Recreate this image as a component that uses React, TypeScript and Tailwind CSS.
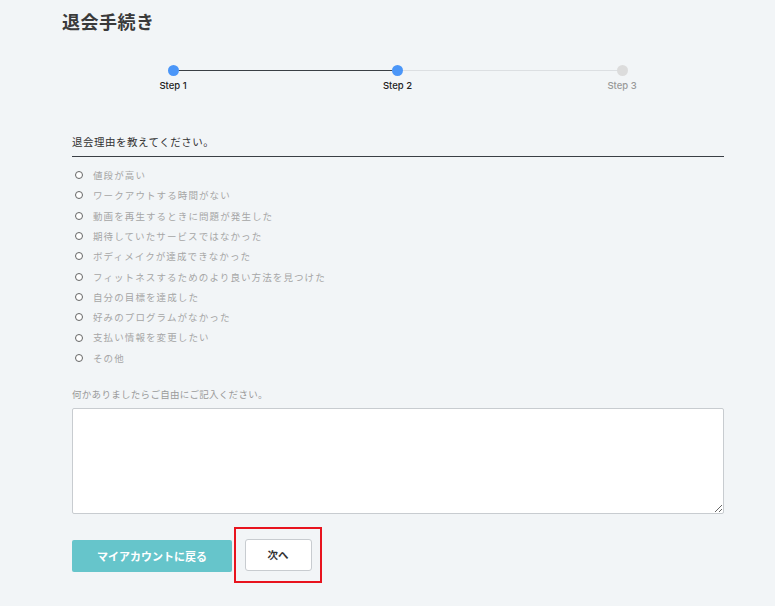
const reasons = [
  "値段が高い",
  "ワークアウトする時間がない",
  "動画を再生するときに問題が発生した",
  "期待していたサービスではなかった",
  "ボディメイクが達成できなかった",
  "フィットネスするためのより良い方法を見つけた",
  "自分の目標を達成した",
  "好みのプログラムがなかった",
  "支払い情報を変更したい",
  "その他",
];

const jp = "font-['Noto_Sans_CJK_JP',sans-serif]";

function Stepper() {
  return (
    <div className="relative ml-[105px] mr-[106px] mt-[32px] h-[40px]">
      <div className="absolute left-[6px] right-[6px] top-[5px] flex">
        <div className="h-px flex-1 bg-[#3a3f45]" />
        <div className="h-px flex-1 bg-[#dcdfe2]" />
      </div>
      <div className="relative flex justify-between">
        {["Step 1", "Step 2", "Step 3"].map((s, i) => (
          <div key={s} className="flex w-[12px] flex-col items-center">
            <div
              className={
                i < 2
                  ? "h-[11px] w-[11px] rounded-full bg-[#4b96f8]"
                  : "h-[11px] w-[11px] rounded-full bg-[#dcdcdc]"
              }
            />
            <div
              className={
                "mt-[3px] whitespace-nowrap font-['Inter',sans-serif] text-[9.5px] font-medium " +
                (i < 2 ? "text-[#222]" : "text-[#999]")
              }
            >
              {s}
            </div>
          </div>
        ))}
      </div>
    </div>
  );
}

export default function App() {
  return (
    <div className={`min-h-[606px] w-[775px] bg-[#f2f5f7] ${jp}`}>
      <div className="pl-[62px] pr-[41px] pt-[9px]">
        <h1 className="text-[18px] font-semibold leading-[24px] text-[#3a3a3a] tracking-[0.5px]">
          退会手続き
        </h1>
        <Stepper />
        <div className="px-[10px] pt-[29px]">
          <div className="border-b border-[#3a3f45] pb-[6px] text-[10.5px] leading-[16px] tracking-[0.5px] text-[#333]">
            退会理由を教えてください。
          </div>
          <div className="mt-[8px] flex flex-col">
            {reasons.map((r) => (
              <label key={r} className="flex h-[20.3px] items-center">
                <span className="ml-[3px] h-[8px] w-[8px] rounded-full border border-[#666] bg-white" />
                <span className="ml-[10px] text-[9.5px] tracking-[1.1px] text-[#a6a6a6]">
                  {r}
                </span>
              </label>
            ))}
          </div>
          <div className="mt-[19px] text-[9.5px] leading-[14px] tracking-[0.3px] text-[#9a9a9a]">
            何かありましたらご自由にご記入ください。
          </div>
          <textarea className="mt-[7px] block h-[106px] w-full rounded-[2px] border border-[#c8ccd0] bg-white" />
          <div className="mt-[13px] flex items-start">
            <button className="mt-[13px] h-[32px] w-[160px] rounded-[2px] bg-[#66c5cb] text-[11px] font-bold text-white">
              マイアカウントに戻る
            </button>
            <div className="ml-[2px] flex h-[56px] w-[88px] items-center justify-center border-2 border-[#e8141e]">
              <button className="block h-[32px] w-[67px] rounded-[3px] border border-[#c8ccd0] bg-white text-[10.5px] font-bold text-[#333]">
                次へ
              </button>
            </div>
          </div>
        </div>
      </div>
    </div>
  );
}
